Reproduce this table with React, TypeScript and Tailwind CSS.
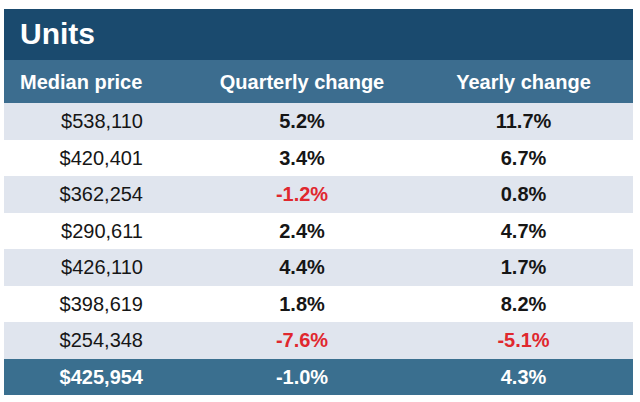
import React from "react";

type Row = { price: string; quarterly: string; yearly: string };

const rows: Row[] = [
  { price: "$538,110", quarterly: "5.2%", yearly: "11.7%" },
  { price: "$420,401", quarterly: "3.4%", yearly: "6.7%" },
  { price: "$362,254", quarterly: "-1.2%", yearly: "0.8%" },
  { price: "$290,611", quarterly: "2.4%", yearly: "4.7%" },
  { price: "$426,110", quarterly: "4.4%", yearly: "1.7%" },
  { price: "$398,619", quarterly: "1.8%", yearly: "8.2%" },
  { price: "$254,348", quarterly: "-7.6%", yearly: "-5.1%" },
];

const pct = (v: string) => (v.startsWith("-") ? "text-[#e0282e]" : "text-[#161616]");

const App: React.FC = () => {
  return (
    <div
      className="w-[640px] h-[402px] bg-white pt-[9px] pl-[4px]"
      style={{ fontFamily: '"Liberation Sans", Arial, sans-serif' }}
    >
      <div className="w-[629px]">
        <div className="h-[51px] bg-[#1a4a6e] flex items-center pl-[16px] pb-[1px]">
          <span className="text-white font-bold text-[30px] leading-none">Units</span>
        </div>

        <div className="h-[43px] bg-[#3c6d8f] grid grid-cols-[160px_276px_1fr] items-center text-white font-bold text-[20px] leading-none">
          <span className="pl-[16px]">Median price</span>
          <span className="text-center">Quarterly change</span>
          <span className="text-center pr-[26px]">Yearly change</span>
        </div>

        {rows.map((r, i) => (
          <div
            key={r.price}
            className={`h-[36.5px] grid grid-cols-[160px_276px_1fr] items-center text-[20px] leading-none ${
              i % 2 === 0 ? "bg-[#e0e5ee]" : "bg-white"
            }`}
          >
            <span className="text-right pr-[21px] text-[#161616]">{r.price}</span>
            <span className={`text-center font-bold ${pct(r.quarterly)}`}>{r.quarterly}</span>
            <span className={`text-center font-bold pr-[26px] ${pct(r.yearly)}`}>{r.yearly}</span>
          </div>
        ))}

        <div className="h-[36px] bg-[#3a6f8f] grid grid-cols-[160px_276px_1fr] items-center text-white font-bold text-[20px] leading-none">
          <span className="text-right pr-[21px]">$425,954</span>
          <span className="text-center">-1.0%</span>
          <span className="text-center pr-[26px]">4.3%</span>
        </div>
      </div>
    </div>
  );
};

export default App;
